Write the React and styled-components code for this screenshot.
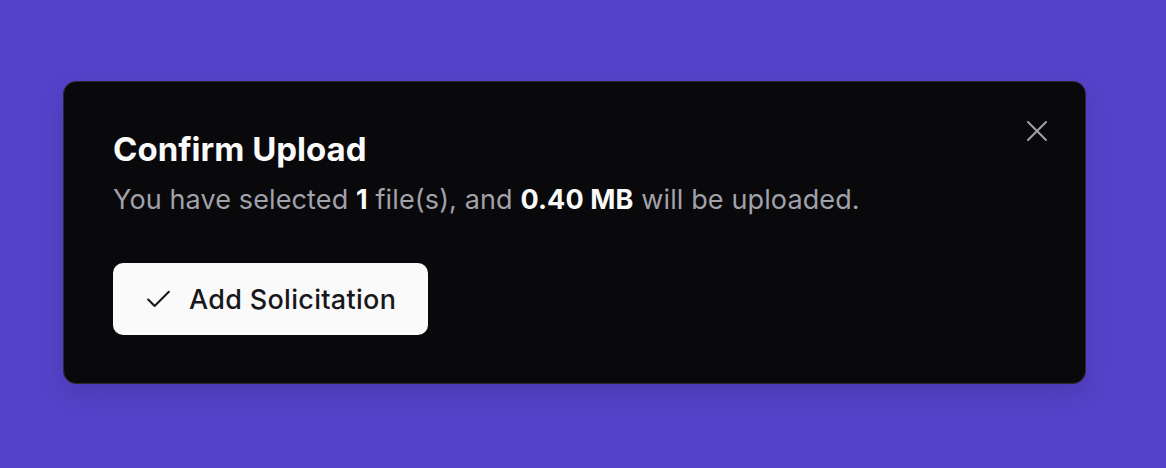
import React from 'react';
import styled, { createGlobalStyle } from 'styled-components';

const GlobalStyle = createGlobalStyle`
  html, body {
    margin: 0;
    padding: 0;
    background: #5542c9;
  }
  body {
    font-family: Inter, "Noto Sans", sans-serif;
    -webkit-font-smoothing: antialiased;
  }
`;

const Page = styled.div`
  box-sizing: border-box;
  width: 1166px;
  height: 468px;
  padding: 81px 80px 0 63px;
`;

const Dialog = styled.div`
  position: relative;
  box-sizing: border-box;
  width: 1023px;
  height: 303px;
  padding: 47px 48px 0 49px;
  background: #09090b;
  border: 1.5px solid #2a2a2e;
  border-radius: 13px;
  box-shadow: 0 10px 24px rgba(0, 0, 0, 0.12);
  display: flex;
  flex-direction: column;
`;

const Title = styled.h2`
  margin: 0;
  font-size: 33px;
  line-height: 40px;
  font-weight: 700;
  letter-spacing: 0;
  color: #fafafa;
`;

const Description = styled.p`
  margin: 13px 0 0;
  font-size: 27px;
  line-height: 36px;
  letter-spacing: 0.12px;
  color: #a1a1aa;

  strong {
    color: #fafafa;
    font-weight: 700;
  }
`;

const Actions = styled.div`
  display: flex;
  margin-top: 45px;
`;

const Button = styled.button`
  display: inline-flex;
  align-items: center;
  gap: 15px;
  height: 72px;
  padding: 0 32px 0 30px;
  border: none;
  border-radius: 10px;
  background: #fafafa;
  color: #18181b;
  font-family: inherit;
  font-size: 27px;
  font-weight: 500;
  letter-spacing: 0.3px;
  cursor: pointer;
`;

const Close = styled.button`
  position: absolute;
  top: 38px;
  right: 37px;
  width: 22px;
  height: 22px;
  padding: 0;
  border: none;
  background: transparent;
  color: #a1a1aa;
  display: flex;
  align-items: center;
  justify-content: center;
`;

const CheckIcon = () => (
  <svg width="31" height="31" viewBox="0 0 24 24" fill="none" stroke="currentColor"
    strokeWidth="1.6" strokeLinecap="round" strokeLinejoin="round">
    <path d="M20 6 9 17l-5-5" />
  </svg>
);

const XIcon = () => (
  <svg width="22" height="22" viewBox="0 0 22 22" fill="none" stroke="currentColor"
    strokeWidth="2" strokeLinecap="round" strokeLinejoin="round">
    <path d="M2 2 20 20" />
    <path d="M20 2 2 20" />
  </svg>
);

export default function App() {
  return (
    <>
      <GlobalStyle />
      <Page>
        <Dialog>
          <Title>Confirm Upload</Title>
          <Description>
            You have selected <strong>1</strong> file(s), and <strong>0.40 MB</strong> will be uploaded.
          </Description>
          <Actions>
            <Button>
              <CheckIcon />
              Add Solicitation
            </Button>
          </Actions>
          <Close aria-label="Close">
            <XIcon />
          </Close>
        </Dialog>
      </Page>
    </>
  );
}
